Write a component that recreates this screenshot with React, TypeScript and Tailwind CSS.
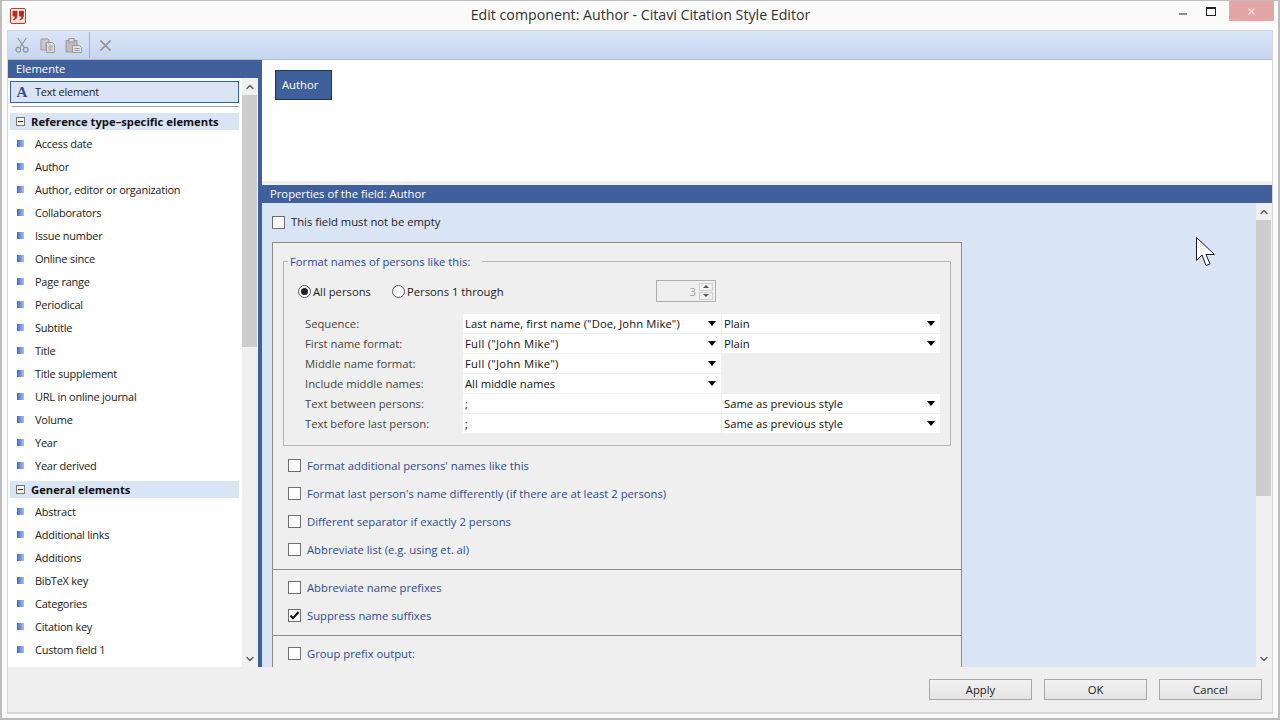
import React from "react";
import { X, ChevronUp, ChevronDown } from "lucide-react";

const typeItems = ["Access date","Author","Author, editor or organization","Collaborators","Issue number","Online since","Page range","Periodical","Subtitle","Title","Title supplement","URL in online journal","Volume","Year","Year derived"];
const generalItems = ["Abstract","Additional links","Additions","BibTeX key","Categories","Citation key","Custom field 1"];

function ListRow({ label }: { label: string }) {
  return (
    <div className="flex h-[23px] items-center pl-[9px] text-[#222]">
      <span className="h-[7px] w-[7px] bg-gradient-to-r from-[#3f67e0] to-[#a9bdf2]" />
      <span className="ml-[11px] text-[11px] tracking-[-0.25px]">{label}</span>
    </div>
  );
}

function GroupHeader({ label }: { label: string }) {
  return (
    <div className="mb-[2px] ml-[2px] flex h-[17px] w-[229px] items-center bg-[#d9e4f5] pl-[6px] font-bold text-[#111]">
      <span className="flex h-[9px] w-[9px] items-center justify-center border border-[#777] bg-[#f4f4f4]">
        <span className="h-px w-[5px] bg-[#333]" />
      </span>
      <span className="ml-[6px]">{label}</span>
    </div>
  );
}

function Scrollbar({ thumbHeight }: { thumbHeight: number }) {
  return (
    <div className="flex h-full w-[16px] shrink-0 flex-col bg-[#f0f0f0]">
      <div className="flex h-[17px] shrink-0 items-center justify-center">
        <ChevronUp size={12} strokeWidth={3} className="text-[#606060]" />
      </div>
      <div className="w-[15px] bg-[#cdcdcd]" style={{ height: thumbHeight }} />
      <div className="flex-1" />
      <div className="flex h-[17px] shrink-0 items-center justify-center">
        <ChevronDown size={12} strokeWidth={3} className="text-[#606060]" />
      </div>
    </div>
  );
}

function Check({ label, checked, blue = true, className = "" }: { label: string; checked?: boolean; blue?: boolean; className?: string }) {
  return (
    <div className={`flex items-center ${className}`}>
      <span className="flex h-[13px] w-[13px] shrink-0 items-center justify-center border border-[#707070] bg-white">
        {checked && (
          <svg width="11" height="11" viewBox="0 0 11 11">
            <path d="M1.5 5.5 L4 8.2 L9.5 2" fill="none" stroke="#111" strokeWidth="2" />
          </svg>
        )}
      </span>
      <span className={`ml-[6px] ${blue ? "pt-[2px] text-[#2b4a9c]" : "text-[#222]"}`}>{label}</span>
    </div>
  );
}

function Radio({ label, checked, className = "" }: { label: string; checked?: boolean; className?: string }) {
  return (
    <div className={`flex items-center ${className}`}>
      <span className="flex h-[13px] w-[13px] items-center justify-center rounded-full border border-[#555] bg-white">
        {checked && <span className="h-[7px] w-[7px] rounded-full bg-[#222]" />}
      </span>
      <span className="ml-[2px] text-[#222]">{label}</span>
    </div>
  );
}

function Caret() {
  return <span className="h-0 w-0 border-x-[4px] border-t-[5px] border-x-transparent border-t-black" />;
}

function Select({ value, w, tracking = 0 }: { value: string; w: number; tracking?: number }) {
  return (
    <div className="flex h-[19px] items-center justify-between bg-white pl-[2px] pr-[5px] text-[#111]" style={{ width: w }}>
      <span style={{ letterSpacing: tracking }}>{value}</span>
      <Caret />
    </div>
  );
}

function TextCell({ value, w }: { value: string; w: number }) {
  return <div className="flex h-[19px] items-center bg-white pl-[2px] text-[#111]" style={{ width: w }}>{value}</div>;
}

function Row({ label, children }: { label: string; children: React.ReactNode }) {
  return (
    <div className="flex h-[20px]">
      <div className="flex h-[19px] w-[158px] items-center text-[#444]">{label}</div>
      <div className="flex gap-px">{children}</div>
    </div>
  );
}

function Btn({ label }: { label: string }) {
  return (
    <div className="flex h-[21px] w-[103px] items-center justify-center border border-[#a8a8a8] bg-gradient-to-b from-[#f2f2f2] to-[#e4e4e4] text-[#222]">
      {label}
    </div>
  );
}

export default function App() {
  return (
    <div className="flex h-[720px] w-[1280px] flex-col overflow-hidden border-x-2 border-b-2 border-t border-[#bdbdbd] bg-[#fafafa] text-[11.25px] leading-none" style={{ fontFamily: '"Open Sans", "Noto Sans", sans-serif' }}>
      {/* title bar */}
      <div className="flex h-[29px] shrink-0 items-center">
        <div className="ml-[8px] flex h-[16px] w-[16px] items-center justify-center rounded-[2px] border border-[#c8372c] bg-gradient-to-b from-white to-[#fbdcd8]">
          <svg width="13" height="11" viewBox="0 0 12 10">
            <path d="M.5.500h4.500v4c0 2.500-1.200 4.200-3.500 5l-.6-1c1.100-.5 1.700-1.200 1.800-2.500H.5zM6.500.500H11v4c0 2.500-1.200 4.200-3.500 5l-.6-1c1.100-.5 1.700-1.200 1.800-2.500H6.500z" fill="#c62418" />
          </svg>
        </div>
        <div className="flex-1 pl-[76px] text-center text-[14.2px] text-[#333]">Edit component: Author - Citavi Citation Style Editor</div>
        <div className="flex h-[20px] items-start self-start">
          <svg width="10" height="3" viewBox="0 0 10 3" className="mr-[17px] mt-[12px]"><rect width="8" height="2" fill="#8f8f8f" /></svg>
          <div className="mr-[13px] mt-[6px] h-[9px] w-[10px] border border-t-2 border-[#222]" />
          <div className="mr-[4px] flex h-[20px] w-[45px] items-center justify-center bg-[#e3a5a5]">
            <X size={11} strokeWidth={2.5} className="text-[#f6dcdc]" />
          </div>
        </div>
      </div>

      {/* inner */}
      <div className="mx-[5px] mb-[4px] flex min-h-0 flex-1 flex-col border-x border-b-2 border-[#d6d6d6] bg-[#efefef]">
        {/* toolbar */}
        <div className="flex h-[30px] shrink-0 items-center border-y border-b-[#b3bbc8] border-t-[#d6d6d6] bg-gradient-to-b from-[#dbe5f7] to-[#c6d6f0] pl-[7px]">
          <svg width="14" height="16" viewBox="0 0 15 17" fill="none" stroke="#909090" strokeWidth="1.200">
            <path d="M3 1 L10 11.500 M12 1 L5 11.500" />
            <circle cx="3.500" cy="13.500" r="2.500" />
            <circle cx="11.500" cy="13.500" r="2.500" />
          </svg>
          <svg width="16" height="15" viewBox="0 0 16 15" className="ml-[11px]">
            <path d="M1 1h7l1 1v3H6v7H1z" fill="#c9c9c9" stroke="#9a9a9a" />
            <path d="M6.500 4.500h6l2 2v8h-8z" fill="#dcdcdc" stroke="#9a9a9a" />
            <path d="M8.500 8h4M8.500 10h4M8.500 12h4" stroke="#9a9a9a" />
          </svg>
          <svg width="17" height="15" viewBox="0 0 17 15" className="ml-[9px]">
            <path d="M1 2.500h11V14H1z" fill="#bcbcbc" stroke="#9a9a9a" />
            <rect x="4" y="0.500" width="5" height="3.500" fill="#dcdcdc" stroke="#9a9a9a" />
            <path d="M7.500 7.500h7l2 2v5h-9z" fill="#e2e2e2" stroke="#9a9a9a" />
            <path d="M9.500 10.500h5M9.500 12.500h5" stroke="#9a9a9a" />
          </svg>
          <span className="ml-[7px] h-[26px] w-px bg-[#a9b0bb]" />
          <svg width="13" height="13" viewBox="0 0 14 14" className="ml-[9px]" fill="none" stroke="#949494" strokeWidth="1.700">
            <path d="M1.500 1.500 L12.500 12.500 M12.500 1.500 L1.500 12.500" />
          </svg>
        </div>

        {/* panels */}
        <div className="flex h-[607px] shrink-0 overflow-hidden">
          {/* left */}
          <div className="flex w-[250px] shrink-0 flex-col">
            <div className="flex h-[18px] shrink-0 items-center bg-[#40609c] pl-[8px] text-white">Elemente</div>
            <div className="flex min-h-0 flex-1">
              <div className="w-[234px] shrink-0 overflow-hidden bg-white">
                <div className="ml-[2px] mt-[3px] flex h-[22px] w-[229px] items-center border border-[#2e62b0] bg-[#d9e4f5] pl-[4px] text-[#222]">
                  <span className="w-[14px] text-center text-[15px] font-bold text-[#2f4f8f]" style={{ fontFamily: '"Liberation Serif", serif' }}>A</span>
                  <span className="ml-[6px] pb-[2px] text-[11px] tracking-[-0.25px]">Text element</span>
                </div>
                <div className="mb-[6px] ml-[4px] mt-[3px] h-px w-[227px] bg-[#a0a0a0]" />
                <GroupHeader label="Reference type–specific elements" />
                {typeItems.map((t) => <ListRow key={t} label={t} />)}
                <div className="h-[4px]" />
                <GroupHeader label="General elements" />
                {generalItems.map((t) => <ListRow key={t} label={t} />)}
              </div>
              <Scrollbar thumbHeight={252} />
            </div>
          </div>

          <div className="w-[4px] shrink-0 bg-[#40609c]" />

          {/* right */}
          <div className="flex min-w-0 flex-1 flex-col">
            <div className="h-[121px] shrink-0 bg-white pl-[13px] pt-[10px]">
              <div className="flex h-[30px] w-[57px] items-center border border-[#1f3560] bg-[#40609c] pl-[6px] text-white">Author</div>
            </div>
            <div className="h-[4px] shrink-0 bg-[#efefef]" />
            <div className="flex h-[18px] shrink-0 items-center bg-[#40609c] pl-[8px] text-white">Properties of the field: Author</div>
            <div className="flex min-h-0 flex-1 bg-[#d9e4f5]">
              <div className="min-w-0 flex-1 overflow-hidden pl-[10px]">
                <Check label="This field must not be empty" blue={false} className="mt-[12px] h-[14px]" />
                <div className="mt-[13px] w-[690px] border-x border-t border-[#8c8c8c] bg-[#efefef]">
                  <div className="px-[10px] pb-[6px] pt-[13px]">
                    <fieldset className="h-[190px] min-w-0 border border-[#b4b4b4]">
                      <legend className="ml-[4px] pl-[2px] pr-[12px] text-[#2b4a9c]">Format names of persons like this:</legend>
                      <div className="pl-[21px]">
                        <div className="mt-[13px] flex h-[22px] items-center">
                          <Radio label="All persons" checked className="-ml-[7px] w-[94px]" />
                          <Radio label="Persons 1 through" className="w-[264px]" />
                          <div className="flex h-[22px] w-[60px] items-center justify-end border border-[#adadad] pr-[2px] text-[#a0a0a0]">
                            <span className="mr-[3px]">3</span>
                            <div className="flex flex-col gap-px">
                              <span className="flex h-[8px] w-[14px] items-center justify-center border border-[#d0d0d0]"><span className="h-0 w-0 border-x-[3px] border-b-[3px] border-x-transparent border-b-[#555]" /></span>
                              <span className="flex h-[8px] w-[14px] items-center justify-center border border-[#d0d0d0]"><span className="h-0 w-0 border-x-[3px] border-t-[3px] border-x-transparent border-t-[#555]" /></span>
                            </div>
                          </div>
                        </div>
                        <div className="mt-[12px]">
                          <Row label="Sequence:"><Select value={'Last name, first name ("Doe, John Mike")'} w={258} tracking={0.1} /><Select value="Plain" w={218} /></Row>
                          <Row label="First name format:"><Select value={'Full ("John Mike")'} w={258} tracking={0.28} /><Select value="Plain" w={218} /></Row>
                          <Row label="Middle name format:"><Select value={'Full ("John Mike")'} w={258} tracking={0.28} /></Row>
                          <Row label="Include middle names:"><Select value="All middle names" w={258} /></Row>
                          <Row label="Text between persons:"><TextCell value=";" w={258} /><Select value="Same as previous style" w={218} /></Row>
                          <Row label="Text before last person:"><TextCell value=";" w={258} /><Select value="Same as previous style" w={218} /></Row>
                        </div>
                      </div>
                    </fieldset>
                    <div className="ml-[5px] mt-[5px]">
                      <Check label="Format additional persons' names like this" className="h-[28px]" />
                      <Check label="Format last person's name differently (if there are at least 2 persons)" className="h-[28px]" />
                      <Check label="Different separator if exactly 2 persons" className="h-[28px]" />
                      <Check label="Abbreviate list (e.g. using et. al)" className="h-[28px]" />
                    </div>
                  </div>
                  <div className="border-t border-[#8c8c8c] pb-[6px] pl-[15px] pt-[3px]">
                    <Check label="Abbreviate name prefixes" className="h-[28px]" />
                    <Check label="Suppress name suffixes" checked className="h-[28px]" />
                  </div>
                  <div className="border-t border-[#8c8c8c] pb-[10px] pl-[15px] pt-[3px]">
                    <Check label="Group prefix output:" className="h-[28px]" />
                  </div>
                </div>
              </div>
              <Scrollbar thumbHeight={276} />
            </div>
          </div>
        </div>

        {/* footer */}
        <div className="flex flex-1 justify-end gap-[12px] pr-[10px] pt-[12px]">
          <Btn label="Apply" />
          <Btn label="OK" />
          <Btn label="Cancel" />
        </div>
      </div>

      {/* mouse cursor */}
      <svg width="20" height="31" viewBox="0 0 20 31" className="absolute left-[1196px] top-[237px]">
        <path d="M0.500 0.500 V23.500 L6 18 L10 28.500 L14 27 L10 17.500 H18.500 Z" fill="#fff" stroke="#1a1a2a" strokeWidth="1" />
      </svg>
    </div>
  );
}
